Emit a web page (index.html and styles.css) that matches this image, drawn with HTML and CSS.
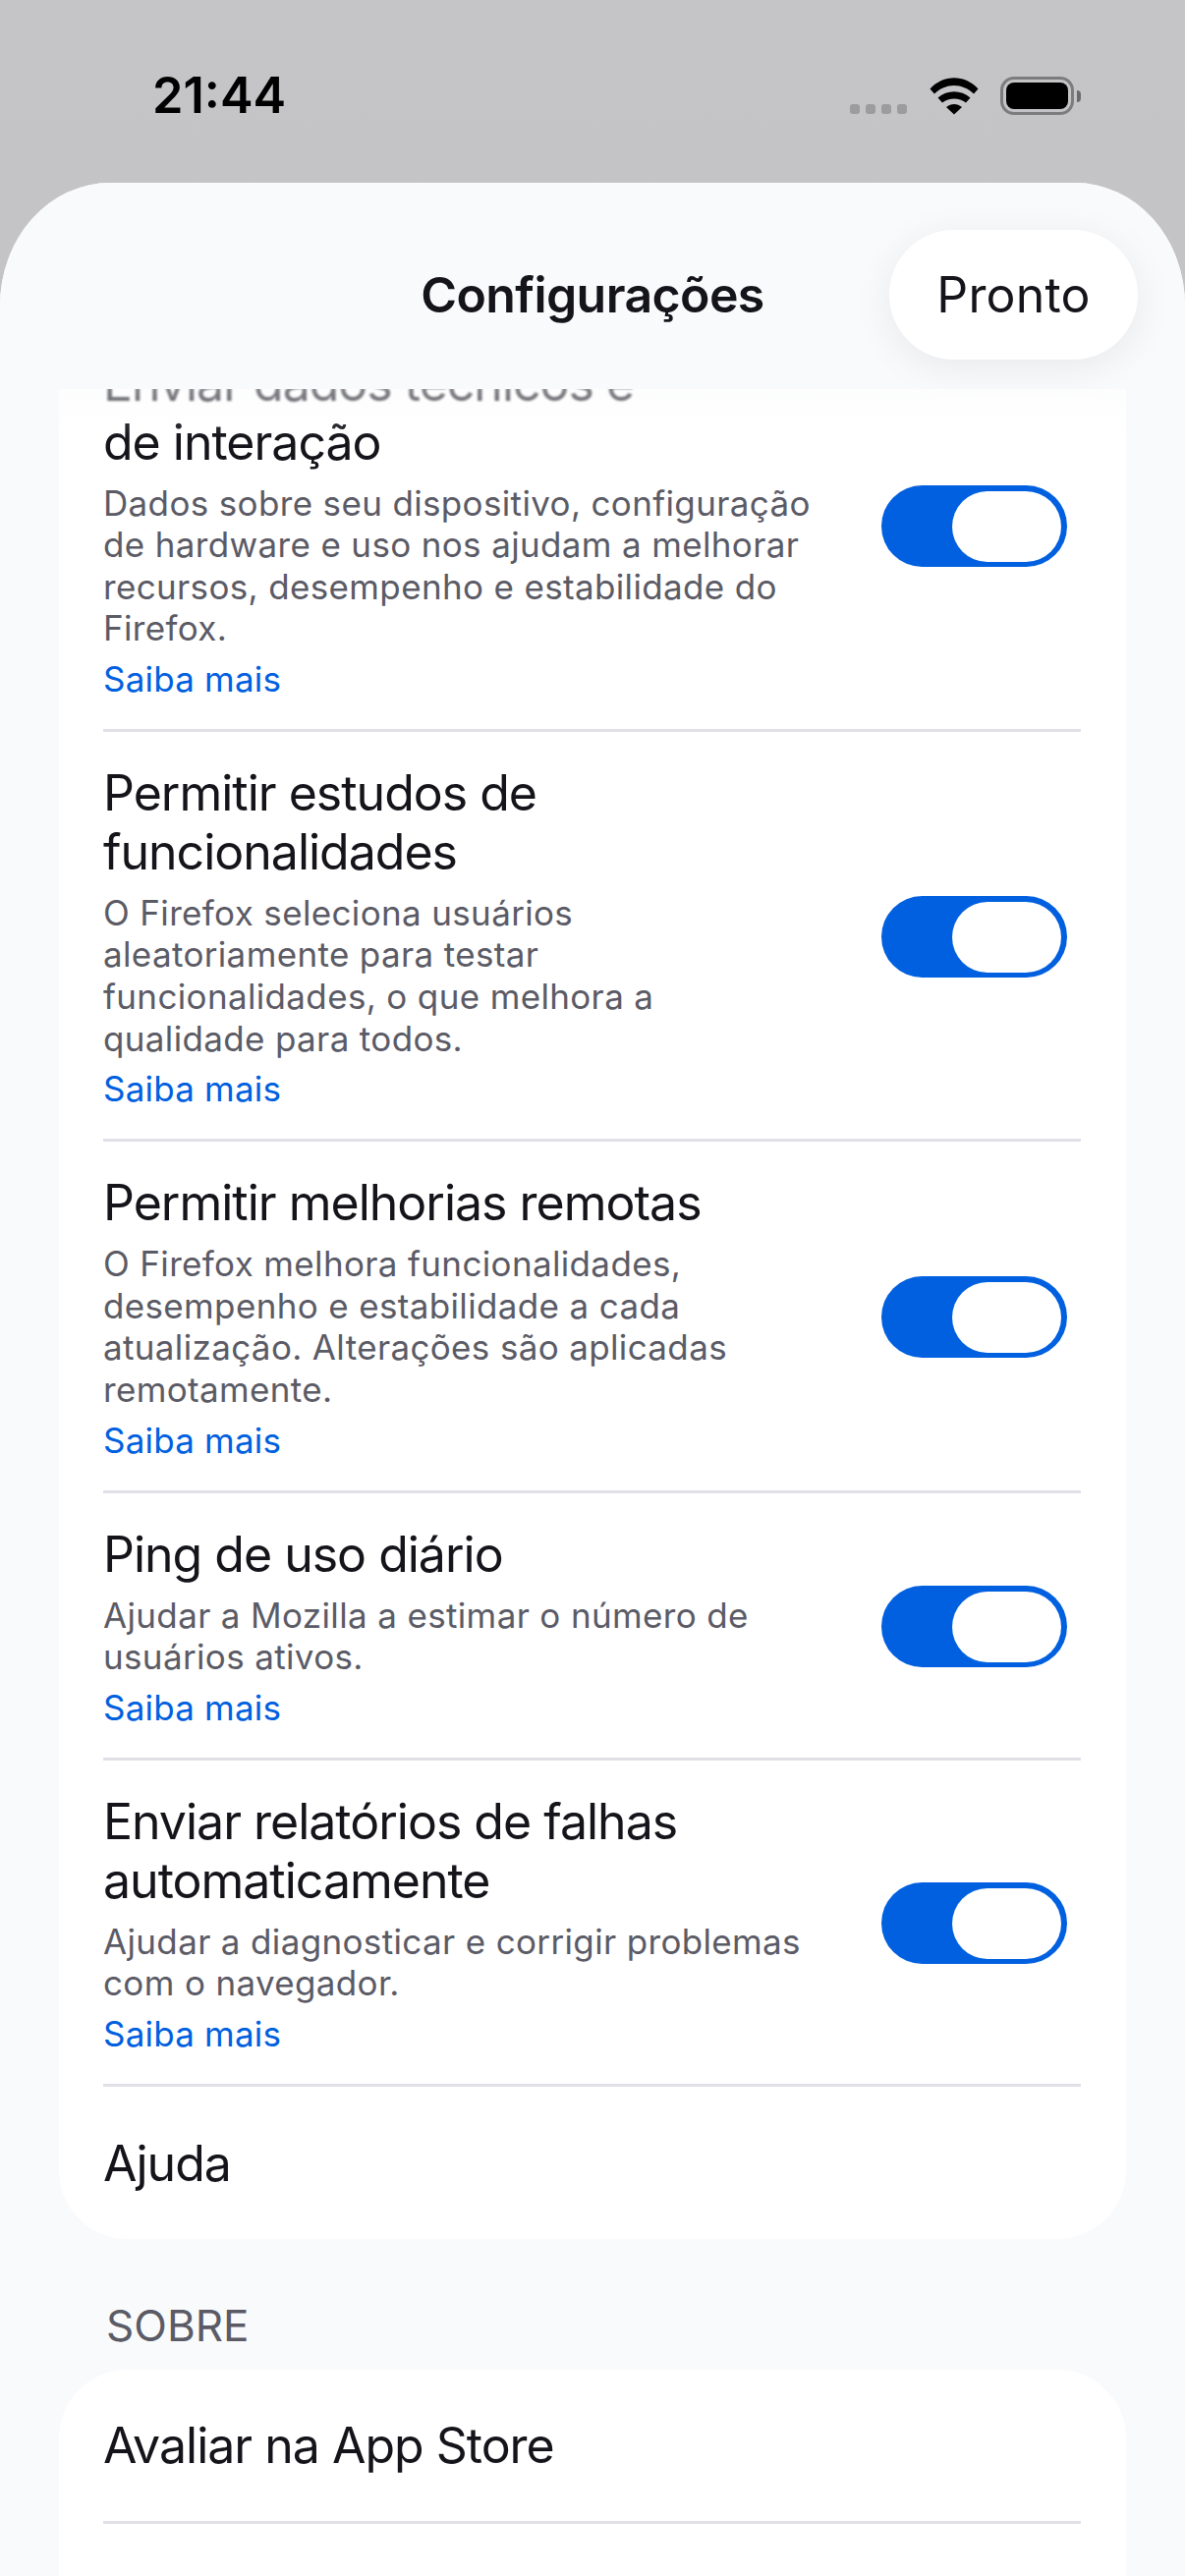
FILE: index.html
```html
<!DOCTYPE html>
<html lang="pt-BR">

<head>
  <meta charset="UTF-8">
  <meta name="viewport" content="width=device-width, initial-scale=1.0">
  <title>Configurações</title>
  <link rel="stylesheet" href="styles.css">
</head>

<body>
  <div class="status">
    <span class="time">21:44</span>
    <div class="status-icons">
      <div class="dots"><i></i><i></i><i></i><i></i></div>
      <svg class="wifi" width="50" height="38" viewBox="0 0 50 38">
        <path d="M0.5 11.5C14 -3.5 36 -3.5 49.5 11.5L45 16.5C33.5 5 16.5 5 5 16.5Z" />
        <path d="M8.5 20.5C18 12 32 12 41.5 20.5L37 25.5C30 20 20 20 13 25.5Z" />
        <path d="M17 30C22 26 28 26 33 30L25 37.5Z" />
      </svg>
      <div class="battery"><div class="level"></div></div>
      <div class="nub"></div>
    </div>
  </div>

  <div class="sheet">
    <div class="header">
      <div></div>
      <h1>Configurações</h1>
      <button class="done">Pronto</button>
    </div>

    <div class="content">
      <ul class="card">
        <li class="row">
          <div class="text">
            <p class="title"><span class="under">Enviar dados técnicos e</span><br>de interação</p>
            <p class="desc">Dados sobre seu dispositivo, configuração<br>de hardware e uso nos ajudam a melhorar<br>recursos, desempenho e estabilidade do<br>Firefox.</p>
            <a class="more">Saiba mais</a>
          </div>
          <div class="toggle"><div class="knob"></div></div>
        </li>
        <li class="row">
          <div class="text">
            <p class="title">Permitir estudos de<br>funcionalidades</p>
            <p class="desc">O Firefox seleciona usuários<br>aleatoriamente para testar<br>funcionalidades, o que melhora a<br>qualidade para todos.</p>
            <a class="more">Saiba mais</a>
          </div>
          <div class="toggle"><div class="knob"></div></div>
        </li>
        <li class="row">
          <div class="text">
            <p class="title">Permitir melhorias remotas</p>
            <p class="desc">O Firefox melhora funcionalidades,<br>desempenho e estabilidade a cada<br>atualização. Alterações são aplicadas<br>remotamente.</p>
            <a class="more">Saiba mais</a>
          </div>
          <div class="toggle"><div class="knob"></div></div>
        </li>
        <li class="row">
          <div class="text">
            <p class="title">Ping de uso diário</p>
            <p class="desc">Ajudar a Mozilla a estimar o número de<br>usuários ativos.</p>
            <a class="more">Saiba mais</a>
          </div>
          <div class="toggle"><div class="knob"></div></div>
        </li>
        <li class="row">
          <div class="text">
            <p class="title">Enviar relatórios de falhas<br>automaticamente</p>
            <p class="desc">Ajudar a diagnosticar e corrigir problemas<br>com o navegador.</p>
            <a class="more">Saiba mais</a>
          </div>
          <div class="toggle"><div class="knob"></div></div>
        </li>
        <li class="row plain">
          <p class="title">Ajuda</p>
        </li>
      </ul>

      <h2 class="section">SOBRE</h2>

      <ul class="card">
        <li class="row plain">
          <p class="title">Avaliar na App Store</p>
        </li>
        <li class="row plain"></li>
      </ul>
    </div>
  </div>
</body>

</html>
```

FILE: styles.css
```css
* {
  margin: 0;
  padding: 0;
  box-sizing: border-box;
}

html,
body {
  height: 2622px;
  overflow: hidden;
}

body {
  display: flex;
  flex-direction: column;
  background: linear-gradient(180deg, #c5c5c7 0%, #bcbcbe 100%);
  font-family: Inter, "Liberation Sans", sans-serif;
  color: #15141a;
}

ul {
  list-style: none;
}

.status {
  height: 186px;
  flex-shrink: 0;
  display: flex;
  justify-content: space-between;
  align-items: flex-start;
  padding: 71px 106px 0 155px;
}

.time {
  font-size: 50.5px;
  line-height: 52px;
  font-weight: 600;
  color: #000;
}

.status-icons {
  display: flex;
  align-items: flex-start;
  padding-top: 7px;
}

.dots {
  display: flex;
  gap: 6px;
  margin-top: 28px;
  margin-right: 23px;
}

.dots i {
  display: block;
  width: 10px;
  height: 10px;
  border-radius: 3px;
  background: #9c9c9e;
}

.wifi {
  fill: #000;
  margin-top: 1px;
  margin-right: 22px;
}

.battery {
  width: 75px;
  height: 39px;
  border: 3px solid #7c7c7e;
  border-radius: 14px;
  padding: 3px;
}

.level {
  height: 100%;
  background: #000;
  border-radius: 8px;
}

.nub {
  width: 4px;
  height: 12px;
  margin: 14px 0 0 3px;
  background: #6a6a6c;
  border-radius: 0 6px 6px 0;
}

.sheet {
  flex: 1;
  position: relative;
  overflow: hidden;
  background: #f9fafc;
  border-radius: 112px 112px 0 0 / 125px 125px 0 0;
}

/* sits over the scrolled list */
.header {
  position: absolute;
  top: 0;
  left: 0;
  right: 0;
  z-index: 2;
  height: 210px;
  padding: 48px 48px 0 0;
  display: grid;
  grid-template-columns: 1fr auto 1fr;
  align-items: start;
  background: #f9fafc;
}

.header::after {
  content: '';
  position: absolute;
  top: 100%;
  left: 0;
  right: 0;
  height: 50px;
  background: linear-gradient(180deg, rgba(249, 250, 252, 0.35) 0%, rgba(249, 250, 252, 0) 100%);
}

h1 {
  font-size: 50px;
  line-height: 132px;
  font-weight: 600;
  letter-spacing: -0.6px;
  margin-right: -48px;
}

.done {
  justify-self: end;
  width: 253px;
  height: 132px;
  border: 0;
  border-radius: 66px;
  background: #fff;
  font-family: inherit;
  font-size: 50px;
  letter-spacing: 0.2px;
  color: #15141a;
  box-shadow: 0 8px 40px rgba(0, 0, 0, 0.07);
}

.content {
  padding: 141.5px 60px 0;
}

.card {
  background: #fff;
  border-radius: 70px;
  padding-left: 45px;
  padding-right: 46px;
}

.row {
  display: flex;
  justify-content: space-between;
  align-items: center;
  padding: 32px 0 28px;
  border-bottom: 3px solid #e0e0e6;
}

.row:last-child {
  border-bottom: 0;
}

.row.plain {
  height: 157px;
  padding: 0;
}

.card:first-child .row.plain {
  height: 155px;
}

.title {
  font-size: 50px;
  line-height: 60px;
  letter-spacing: -1px;
}

.under {
  color: #3e3e45;
  filter: blur(1.2px);
  display: inline-block;
}

.desc {
  margin-top: 11px;
  font-size: 35px;
  line-height: 42.6px;
  letter-spacing: 0.35px;
  color: #5b5b66;
}

.more {
  display: block;
  margin-top: 8px;
  font-size: 35px;
  line-height: 45px;
  letter-spacing: 0.2px;
  color: #0060df;
}

.toggle {
  width: 189px;
  height: 83px;
  margin: -2px 14px 0 0;
  flex-shrink: 0;
  display: flex;
  justify-content: flex-end;
  padding: 6px 6px 5px 0;
  border-radius: 42px;
  background: #0060df;
}

.knob {
  width: 111px;
  height: 72px;
  border-radius: 36px;
  background: #fff;
}

.section {
  margin-top: 59px;
  margin-bottom: 16px;
  padding-left: 48px;
  font-size: 44px;
  line-height: 58px;
  font-weight: 400;
  color: #5b5b66;
}
```
